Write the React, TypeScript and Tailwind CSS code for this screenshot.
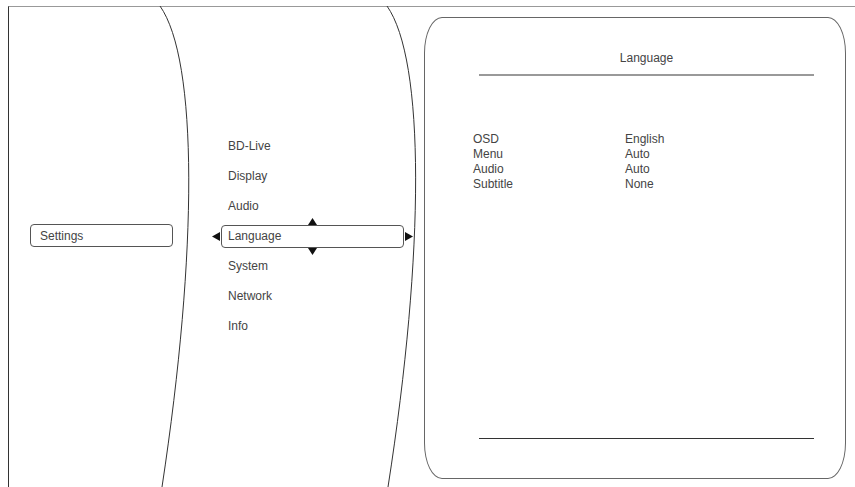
import React from "react";

const menuItems = ["BD-Live", "Display", "Audio", "Language", "System", "Network", "Info"];

const settingsRows = [
  { label: "OSD", value: "English" },
  { label: "Menu", value: "Auto" },
  { label: "Audio", value: "Auto" },
  { label: "Subtitle", value: "None" },
];

const Arrow = ({ dir }: { dir: "left" | "right" | "up" | "down" }) => {
  const points = {
    left: "8,0 8,9 0,4.5",
    right: "0,0 0,9 8,4.5",
    up: "0,7 9,7 4.5,0",
    down: "0,0 9,0 4.5,7",
  }[dir];
  const size = dir === "left" || dir === "right" ? { w: 8, h: 9 } : { w: 9, h: 7 };
  return (
    <svg width={size.w} height={size.h} viewBox={`0 0 ${size.w} ${size.h}`} className="block">
      <polygon points={points} fill="#111" />
    </svg>
  );
};

const MenuItem = ({ label, selected }: { label: string; selected: boolean }) => {
  if (!selected) {
    return <div className="h-[30px] flex items-center pl-[7px]">{label}</div>;
  }
  return (
    <div className="h-[30px] flex items-center">
      <div className="relative w-[183px] h-[23px] border border-[#555] rounded-[4px] flex items-center pl-[6px]">
        {label}
        <div className="absolute left-[-10px] top-[6px]">
          <Arrow dir="left" />
        </div>
        <div className="absolute right-[-10px] top-[6px]">
          <Arrow dir="right" />
        </div>
        <div className="absolute left-[86px] top-[-8px]">
          <Arrow dir="up" />
        </div>
        <div className="absolute left-[86px] bottom-[-8px]">
          <Arrow dir="down" />
        </div>
      </div>
    </div>
  );
};

export default function App() {
  return (
    <div
      className="relative w-[855px] h-[487px] bg-white overflow-hidden text-[12px] text-[#444]"
      style={{ fontFamily: '"Liberation Sans", Arial, sans-serif' }}
    >
      {/* curved separators */}
      <svg
        className="absolute inset-0 pointer-events-none"
        width={855}
        height={487}
        viewBox="0 0 855 487"
      >
        <path d="M160 6 C 198 60, 198 250, 162 487" fill="none" stroke="#333" strokeWidth={1} />
        <path d="M387 6 C 425 60, 425 250, 388 487" fill="none" stroke="#333" strokeWidth={1} />
      </svg>

      <div className="ml-[8px] mt-[6px] h-[481px] border-l border-t border-l-[#333] border-t-[#999] flex">
        {/* left column */}
        <div className="w-[212px] pl-[21px] pt-[217px]">
          <div className="w-[143px] h-[23px] border border-[#555] rounded-[4px] flex items-center pl-[9px]">
            Settings
          </div>
        </div>

        {/* middle menu */}
        <div className="w-[203px] pt-[124px] flex flex-col">
          {menuItems.map((item) => (
            <MenuItem key={item} label={item} selected={item === "Language"} />
          ))}
        </div>

        {/* detail panel */}
        <div className="mt-[10px] w-[422px] h-[462px] border border-[#666] rounded-[18px/36px] flex flex-col pt-[33px]">
          <div className="ml-[54px] w-[335px]">
            <div className="text-center leading-[15px]">Language</div>
            <div className="mt-[8px] h-[2px] bg-[#999]" />
          </div>

          <div className="mt-[56px] pl-[48px] grid grid-cols-[152px_auto] leading-[15px]">
            {settingsRows.map((row) => (
              <React.Fragment key={row.label}>
                <div>{row.label}</div>
                <div>{row.value}</div>
              </React.Fragment>
            ))}
          </div>

          <div className="mt-auto mb-[39px] ml-[54px] w-[335px] h-px bg-[#333]" />
        </div>
      </div>
    </div>
  );
}
